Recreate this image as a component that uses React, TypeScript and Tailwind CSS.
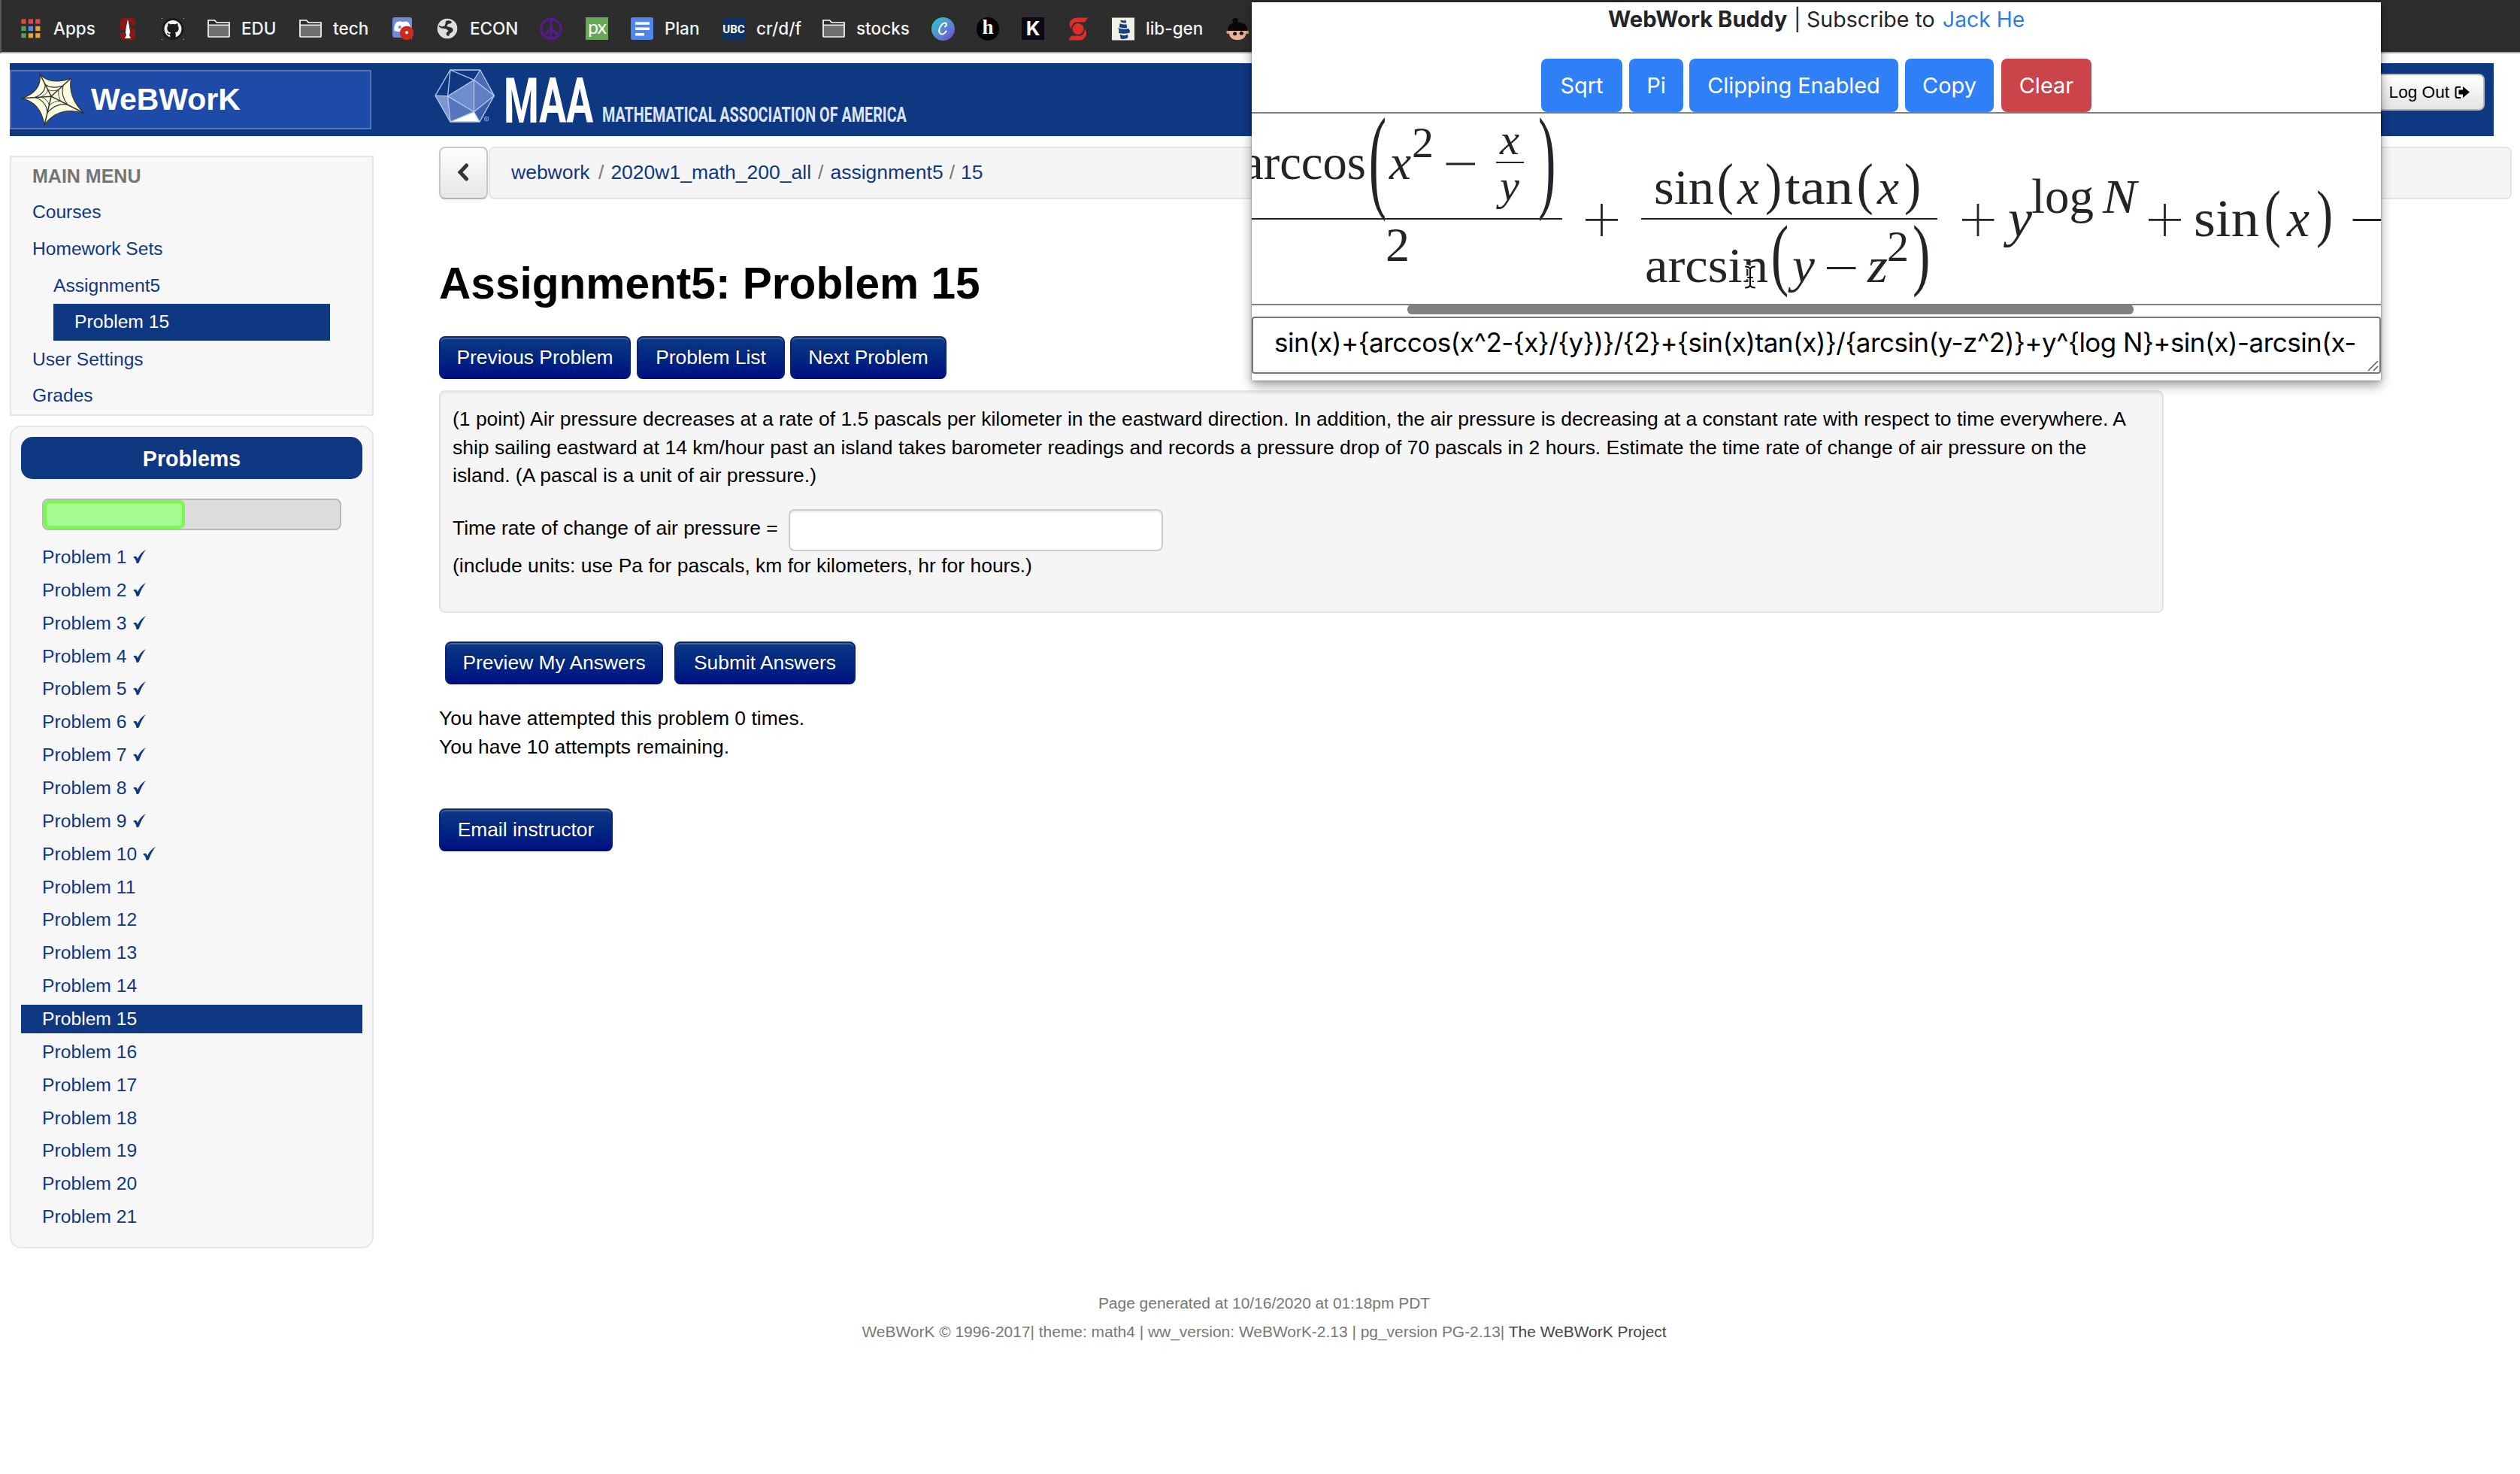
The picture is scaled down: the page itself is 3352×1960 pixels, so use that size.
import React from "react";

type Children = { children?: React.ReactNode };

const Folder = () => (
  <svg viewBox="0 0 30 24" className="w-[30px] h-[24px]">
    <path d="M1 22.2V1h8.6l2.6 3H29v18.2q0 .8-.8.8H1.8q-.8 0-.8-.8z" fill="#2d2d2d" stroke="#fff" strokeWidth="1.7" />
    <rect x="2" y="8" width="26" height="14" fill="#6f6f6f" />
    <path d="M1 7.3h28" stroke="#fff" strokeWidth="1.5" />
  </svg>
);

const AppsGrid = () => (
  <svg viewBox="0 0 26 26" className="w-[26px] h-[26px]">
    {["#e34a3f", "#e34a3f", "#e34a3f", "#57a05c", "#4c8df6", "#e6a33a", "#57a05c", "#e6a33a", "#e6a33a"].map((c, i) => (
      <rect key={i} x={0.4 + (i % 3) * 9.4} y={0.4 + Math.floor(i / 3) * 9.4} width="6.2" height="6.2" fill={c} />
    ))}
  </svg>
);

const Stanford = () => (
  <svg viewBox="0 0 30 31" className="w-[30px] h-[31px]">
    <path d="M8 1h14l3 3v7h-6V7h-6v5l12 3v12l-3 3H8l-3-3v-7h6v4h7v-5L5 16V4z" fill="#8c1515" />
    <path d="M15 3l1.800 8 1.200 9-1 4 2 4h-8l2-4-1-4 1.200-9z" fill="#fff" />
  </svg>
);

const GithubMark = () => (
  <svg viewBox="0 0 30 30" className="w-[31px] h-[31px]">
    <circle cx="15" cy="15" r="14.500" fill="#1a1a1a" />
    <path d="M15 3.500C8.500 3.500 3.500 8.700 3.500 15c0 5 3.200 9.400 7.700 11v-3.400c-3 .6-3.800-1-4.400-2.400 1.800.3 2.400 1.600 4.500 1.300.1-.8.500-1.400.9-1.800-3.300-.5-4.900-2.200-4.900-5.500 0-1.400.4-2.500 1.200-3.400-.3-1-.2-2.200.2-3.100 1.500 0 2.500.7 3.300 1.200 2-.5 4-.5 6 0 .8-.5 1.800-1.200 3.300-1.200.4.9.5 2.100.2 3.100.8.9 1.200 2 1.200 3.400 0 3.300-1.600 5-4.900 5.500.6.6 1 1.400 1 2.600V26c4.500-1.600 7.700-6 7.700-11C26.500 8.700 21.500 3.500 15 3.500z" fill="#f2f2f2" />
    <path d="M0 1h1.200M28.800 1H30M0 29h1.200M28.800 29H30" stroke="#bbb" strokeWidth="1.200" />
  </svg>
);

const DiscordMark = () => (
  <svg viewBox="0 0 30 31" className="w-[30px] h-[31px]">
    <rect x="2" y="0" width="26" height="27" rx="3" fill="#7289da" />
    <path d="M4.500 18C4 12 6 6 9 6q3-1.500 5 0h3q3-1 5 0c3 2 4 6 4 10l-3 3H9z" fill="#fff" />
    <circle cx="11.700" cy="13" r="2" fill="#7289da" />
    <path d="M26 27l2 3v-6z" fill="#7289da" />
    <circle cx="21" cy="20.800" r="9.300" fill="#cc2a1e" />
    <circle cx="21" cy="20.300" r="2" fill="#fff" />
  </svg>
);

const Globe = () => (
  <svg viewBox="0 0 28 28" className="w-[28px] h-[28px]">
    <circle cx="14" cy="14" r="13.300" fill="#dedede" />
    <path d="M12 4q5-2 8 1l-1 2-4 1-2 3 6 1.500q4 2 2 5.500l-4 3-1 3-3-1-.5-3 3-3-3-2.500-6-1q-4-1-4-4l4 2 4-1 1-3z" fill="#2d2d2d" />
  </svg>
);

const Peace = () => (
  <svg viewBox="0 0 31 31" className="w-[31px] h-[31px]">
    <g fill="none" stroke="#541a8f" strokeWidth="3.200">
      <circle cx="15.500" cy="15.500" r="13.700" />
      <path d="M15.500 2v27M15.500 15L6 24.500M15.500 15l9.500 9.500" />
    </g>
  </svg>
);

const DocIcon = () => (
  <svg viewBox="0 0 30 30" className="w-[30px] h-[30px]">
    <rect width="30" height="30" rx="3" fill="#4f86ec" />
    <path d="M6 8h19M6 15.300h19M6 22.700h12" stroke="#fff" strokeWidth="3.600" />
  </svg>
);

const LetterC = () => (
  <span className="flex h-[31px] w-[31px] items-center justify-center rounded-full bg-linear-to-br from-[#35b6c9] from-20% to-[#6a35d8]">
    <svg viewBox="0 0 31 31" className="h-[31px] w-[31px]">
      <path d="M18 12.500q3-2 1.500-4.500-2.500-1.500-6 2c-3.500 4.500-4 9-2 11.500 2.500 2 6 .5 8-3" fill="none" stroke="#fff" strokeWidth="2" strokeLinecap="round" />
    </svg>
  </span>
);

const Scotia = () => (
  <svg viewBox="0 0 30 31" className="h-[31px] w-[30px]">
    <g fill="#dc2f27">
      <path d="M28 .5l-4 6H12q-5 1-6 9Q1 8 6 3.500 9 .5 13 .5z" />
      <path d="M2 30.500l4-6h12q5-1 6-9 4.500 6 0 11.500-3 3.500-7 3.500z" />
      <circle cx="15" cy="15.500" r="7.500" />
    </g>
  </svg>
);

const LibGen = () => (
  <svg viewBox="0 0 31 31" className="h-[31px] w-[31px]">
    <rect width="31" height="31" fill="#f0f0e4" />
    <g fill="#173f7d">
      <path d="M12 3q5 2 7 0l1 4q-4 1-8-1z" />
      <path d="M11 8q5 2 9 1l1 5q-6 1-11-1z" />
      <path d="M8 14q8 3 15 1 3 4 1 6-8 2-15 0 2-4-1-7z" />
      <path d="M11 23q6 3 11 0v5q-5 2-10 1z" />
    </g>
  </svg>
);

const GirlFace = () => (
  <svg viewBox="0 0 31 31" className="h-[31px] w-[31px]">
    <path d="M8 3l4-3 5 2-2 5h-5z" fill="#0b0708" />
    <path d="M2 19Q1 7 15.500 6 30 7 29 19l-2 5H4z" fill="#0b0708" />
    <circle cx="2.500" cy="20" r="2.300" fill="#d99a7e" />
    <circle cx="29" cy="20" r="2.300" fill="#d99a7e" />
    <path d="M3.500 18h24.500q0 12.500-12.300 12.500T3.500 18z" fill="#eab195" />
    <circle cx="12" cy="22" r="2.600" fill="#1d1112" />
    <circle cx="21" cy="21.500" r="2.600" fill="#1d1112" />
  </svg>
);

function Bookmark({ width, icon, label }: { width: string; icon: React.ReactNode; label?: string }) {
  return (
    <div className={"flex h-[31px] shrink-0 items-center " + width}>
      <span className="flex w-[30px] shrink-0 items-center justify-center">{icon}</span>
      {label && <span className="ml-[15px] whitespace-nowrap text-[22.500px] font-medium leading-[30px] text-[#f3f3f3]">{label}</span>}
    </div>
  );
}

function BookmarksBar() {
  return (
    <div className="flex h-[71px] items-center border-b-2 border-l-2 border-b-[#a9a9a9] border-l-[#575757] bg-[#2d2d2d] pl-[24px] pt-[7px] font-['Inter',sans-serif]">
      <Bookmark width="w-[129px]" icon={<AppsGrid />} label="Apps" />
      <Bookmark width="w-[60px]" icon={<Stanford />} />
      <Bookmark width="w-[61px]" icon={<GithubMark />} />
      <Bookmark width="w-[122px]" icon={<Folder />} label="EDU" />
      <Bookmark width="w-[122px]" icon={<Folder />} label="tech" />
      <Bookmark width="w-[60px]" icon={<DiscordMark />} />
      <Bookmark width="w-[138px]" icon={<Globe />} label="ECON" />
      <Bookmark width="w-[61px]" icon={<Peace />} />
      <Bookmark
        width="w-[60px]"
        icon={<span className="block h-[30px] w-[30px] bg-[#67a857] text-center font-['Lato',sans-serif] text-[25px] leading-[25px] tracking-[-1px] text-white">px</span>}
      />
      <Bookmark width="w-[122px]" icon={<DocIcon />} label="Plan" />
      <Bookmark
        width="w-[133px]"
        icon={<span className="block h-[30px] w-[30px] bg-[#0f3364] text-center font-['Roboto',sans-serif] text-[15px] font-bold leading-[33px] text-white">UBC</span>}
        label="cr/d/f"
      />
      <Bookmark width="w-[145px]" icon={<Folder />} label="stocks" />
      <Bookmark width="w-[60px]" icon={<LetterC />} />
      <Bookmark
        width="w-[60px]"
        icon={<span className="block h-[31px] w-[31px] rounded-full bg-black text-center font-['Liberation_Serif',serif] text-[27px] font-bold leading-[27px] text-white">h</span>}
      />
      <Bookmark
        width="w-[60px]"
        icon={<span className="block h-[30px] w-[30px] bg-[#0c0714] text-center text-[26px] font-bold leading-[29px] text-white">K</span>}
      />
      <Bookmark width="w-[60px]" icon={<Scotia />} />
      <Bookmark width="w-[152px]" icon={<LibGen />} label="lib-gen" />
      <Bookmark width="w-[60px]" icon={<GirlFace />} />
    </div>
  );
}

const SpiderWeb = () => (
  <svg viewBox="80 235 260 212" className="h-[71px] w-[87px] shrink-0">
    <path
      d="M158 240Q200 285 282 256Q268 330 332 394Q230 365 176 442Q160 350 84 336Q165 310 158 240Z"
      fill="#fbfbe0"
      stroke="#3a3a38"
      strokeWidth="4"
      strokeLinejoin="round"
    />
    <g fill="none" stroke="#33332f" strokeWidth="4.500">
      <path d="M158 240L203 328L282 256M203 328L332 394M203 328L176 442M203 328L84 336" />
      <path d="M179 281Q205 300 250 286Q240 325 268 361Q225 352 188 392Q182 345 138 332Q180 315 179 281Z" strokeWidth="3.500" />
      <path d="M189 301Q207 310 232 302Q228 322 240 347Q215 345 195 364Q190 340 162 330Q190 318 189 301Z" strokeWidth="2.500" />
    </g>
  </svg>
);

const Icosahedron = () => (
  <svg viewBox="170 214 250 220" className="h-[73px] w-[83px] shrink-0">
    <path d="M331 260L226 325L331 388Z" fill="#6f8ccb" />
    <path d="M331 260L412 323L331 388Z" fill="#5f7fc2" />
    <path d="M226 325L331 388L236 428Z" fill="#5576bc" />
    <path d="M176 323L226 325L236 428Z" fill="#7c96cf" />
    <path d="M356 220L412 323L331 260Z" fill="#4a6cb4" />
    <path d="M412 323L354 428L331 388Z" fill="#3b5fab" />
    <path d="M236 428L331 388L354 428Z" fill="#fff" />
    <g fill="none" stroke="#b7c7ea" strokeWidth="4" strokeLinejoin="round">
      <path d="M236 220H356L412 323L354 428H236L176 323Z" />
      <path d="M331 260L226 325L331 388Z" />
      <path d="M236 220L331 260L356 220M331 260L412 323L331 388L354 428M331 388L236 428L226 325L176 323M226 325L236 220" />
    </g>
    <circle cx="381" cy="416" r="8" fill="none" stroke="#6f8ccb" strokeWidth="4" />
    <circle cx="381" cy="416" r="3.500" fill="#6f8ccb" />
  </svg>
);

const LogOutIcon = () => (
  <svg viewBox="0 0 20 18" className="ml-[7px] h-[18px] w-[20px]">
    <path d="M8 1.700H4Q1.500 1.700 1.500 4v9.500q0 2.500 2.500 2.500h4" fill="none" stroke="#000" strokeWidth="2" />
    <path d="M5.500 5.500H11V1l9 7.500L11 16v-4.500H5.500z" fill="#000" />
  </svg>
);

function Header() {
  return (
    <header className="ml-[13px] mt-[13px] flex h-[97px] w-[3304px] items-start bg-[#0f3883] pt-[9px]">
      <div className="flex h-[79px] w-[481px] shrink-0 items-center border-2 border-[#5376b8] bg-[#1e4ba8] pl-[12px]">
        <SpiderWeb />
        <span className="ml-[7px] text-[41px] font-bold leading-[75px] text-white">WeBWorK</span>
      </div>
      <div className="ml-[83px] mt-[-2px] flex items-start">
        <Icosahedron />
        <div className="ml-[10px] mt-[2px] w-[131px] shrink-0">
          <span className="block origin-left scale-x-[0.645] whitespace-nowrap font-['Roboto',sans-serif] text-[83px] font-bold leading-[84px] text-white">MAA</span>
        </div>
        <span className="mt-[41px] block w-[500px] origin-left scale-x-[0.706] whitespace-nowrap font-['Roboto',sans-serif] text-[28px] font-bold leading-[42px] text-[#dce4f4]">
          MATHEMATICAL ASSOCIATION OF AMERICA
        </span>
      </div>
      <button className="ml-auto mr-[12px] mt-[5px] flex h-[49px] items-center rounded-lg border-2 border-[#b9bcc4] bg-linear-to-b from-white to-[#e4e4e4] px-[18px] text-[22.600px] text-black">
        Log Out
        <LogOutIcon />
      </button>
    </header>
  );
}

function MenuRow({ children, indent = "pl-[28px]" }: Children & { indent?: string }) {
  return <a className={"block h-[48.900px] text-[24.600px] leading-[49.500px] text-[#0f3883] " + indent}>{children}</a>;
}

function MainMenu() {
  return (
    <nav className="h-[346px] border-2 border-[#e6e6e6] bg-[#f7f7f7]">
      <h2 className="h-[48px] pl-[28px] pt-px text-[25px] font-bold leading-[48px] text-[#757575]">MAIN MENU</h2>
      <MenuRow>Courses</MenuRow>
      <MenuRow>Homework Sets</MenuRow>
      <MenuRow indent="pl-[56px]">Assignment5</MenuRow>
      <a className="ml-[56px] block h-[48.900px] w-[368px] bg-[#0f3883] pl-[28px] text-[24.700px] leading-[48.900px] text-white">Problem 15</a>
      <MenuRow>User Settings</MenuRow>
      <MenuRow>Grades</MenuRow>
    </nav>
  );
}

const Check = () => (
  <svg viewBox="0 0 16 17" role="img" aria-label="completed" className="ml-[8px] inline-block h-[18px] w-[17px] align-baseline">
    <path d="M0 9.500q2.500-1.900 4.300-.7.800.8 1.300 2.700Q9.300 3.500 16 0 11 6 7.300 16.400q-.8.700-3 .5Q3.300 11 0 9.500z" fill="#0f3883" />
  </svg>
);

const problems = Array.from({ length: 21 }, (_, i) => i + 1);

function ProblemsPanel() {
  return (
    <section className="mt-[13px] h-[1094px] rounded-[15px] border-2 border-[#e6e6e6] bg-[#f7f7f7] px-[13px] pt-[13px]">
      <h2 className="h-[56px] rounded-[15px] bg-[#0f3883] text-center text-[28.600px] font-bold leading-[58px] text-white">Problems</h2>
      <div className="mx-[28px] mt-[26px] h-[42px] rounded-lg border-2 border-[#b9b9b9] bg-[#dcdcdc]">
        <div className="h-[38px] w-[188px] rounded-[7px] border-4 border-[#76fb4c] bg-[#a6fb93]" />
      </div>
      <ul className="mt-[17px] flex flex-col gap-[6.210px]">
        {problems.map((n) => (
          <li
            key={n}
            className={
              n === 15
                ? "h-[37.660px] whitespace-pre bg-[#0f3883] pl-[28px] text-[24.700px] leading-[37.660px] text-white"
                : "h-[37.660px] whitespace-pre pl-[28px] text-[24.700px] leading-[37.660px] text-[#0f3883]"
            }
          >
            Problem {n}
            {n <= 10 && <Check />}
          </li>
        ))}
      </ul>
    </section>
  );
}

function PrimaryButton({ children, width }: Children & { width: string }) {
  return (
    <button
      className={
        "h-[57px] rounded-lg border-2 border-x-[#06246f] border-b-[#001070] border-t-[#0b2f74] bg-linear-to-b from-[#0f3883] to-[#000d82] text-center text-[26.360px] leading-[53px] text-white shadow-[inset_0_2px_0_rgba(255,255,255,0.2),0_2px_4px_rgba(0,0,0,0.05)] [text-shadow:0_-2px_0_rgba(0,0,0,0.25)] " +
        width
      }
    >
      {children}
    </button>
  );
}

function Breadcrumb() {
  return (
    <div className="flex h-[70px] items-stretch">
      <button className="flex w-[65px] items-center justify-center rounded-lg border-2 border-[#c8c8c8] border-b-[#b3b3b3] bg-linear-to-b from-white to-[#e6e6e6] shadow-[0_2px_4px_rgba(0,0,0,0.05)]">
        <svg viewBox="0 0 16 24" className="-ml-0.5 -mt-0.5 h-[24px] w-[16px]">
          <path d="M12.500 3L4 12l8.500 9" fill="none" stroke="#333" strokeWidth="5" strokeLinecap="round" />
        </svg>
      </button>
      <div className="ml-px flex flex-1 items-center whitespace-pre rounded-lg border-2 border-[#e5e5e5] bg-[#f5f5f5] pl-[28px] text-[26.500px] text-[#0f3883]">
        <span className="w-[107px]">webwork</span>
        <span className="mx-[9px] text-[#777]">/</span>2020w1_math_200_all<span className="mx-[9px] text-[#777]">/</span>assignment5
        <span className="mx-[8px] text-[#777]">/</span>15
      </div>
    </div>
  );
}

function ProblemPage() {
  return (
    <main className="ml-[87px] w-[2757px] text-[26.470px] leading-[37.660px] text-black">
      <Breadcrumb />
      <h1 className="mt-[74px] h-[75px] text-[58.600px] font-bold leading-[75px]">Assignment5: Problem 15</h1>
      <div className="mt-[33px] flex">
        <PrimaryButton width="w-[255px]">Previous Problem</PrimaryButton>
        <PrimaryButton width="ml-[8px] w-[197px]">Problem List</PrimaryButton>
        <PrimaryButton width="ml-[7px] w-[208px]">Next Problem</PrimaryButton>
      </div>
      <section className="mt-[15px] h-[296px] w-[2294px] rounded-lg border-2 border-[#e3e3e3] bg-[#f5f5f5] pl-[16px] pt-[18px] shadow-[inset_0_2px_2px_rgba(0,0,0,0.05)]">
        <p className="whitespace-nowrap">
          (1 point) Air pressure decreases at a rate of 1.5 pascals per kilometer in the eastward direction. In addition, the air pressure is decreasing at a constant rate with respect to time everywhere. A
          <br />
          ship sailing eastward at 14 km/hour past an island takes barometer readings and records a pressure drop of 70 pascals in 2 hours. Estimate the time rate of change of air pressure on the
          <br />
          island. (A pascal is a unit of air pressure.)
        </p>
        <div className="mt-[25px] flex h-[56px] items-center">
          <span className="mb-[5px] w-[447px] tracking-[-0.030px]">Time rate of change of air pressure =</span>
          <input className="h-[56px] w-[498px] rounded-lg border-2 border-[#ccc] bg-white shadow-[inset_0_2px_2px_rgba(0,0,0,0.075)]" />
        </div>
        <p className="pt-px">(include units: use Pa for pascals, km for kilometers, hr for hours.)</p>
      </section>
      <div className="ml-[8px] mt-[38px] flex gap-[15px]">
        <PrimaryButton width="w-[290px]">Preview My Answers</PrimaryButton>
        <PrimaryButton width="w-[241px]">Submit Answers</PrimaryButton>
      </div>
      <p className="mt-[27px]">
        You have attempted this problem 0 times.
        <br />
        You have 10 attempts remaining.
      </p>
      <div className="mt-[63px] flex">
        <PrimaryButton width="w-[231px]">Email instructor</PrimaryButton>
      </div>
    </main>
  );
}

const INK = "#212529";

/** Stretchy delimiter filling the box x..x+w, y..y+h. */
function Paren({ x, y, w, h, close = false }: { x: number; y: number; w: number; h: number; close?: boolean }) {
  const sx = w / 25.6;
  const sy = h / 87;
  const bearing = close ? 2.9 : 4.8;
  return (
    <text fontSize="100" transform={`translate(${x - bearing * sx} ${y + 69 * sy}) scale(${sx} ${sy})`}>
      {close ? ")" : "("}
    </text>
  );
}

/** Word or symbol set to an exact advance width. */
function Word({ x, y, w, size, italic, children }: { x: number; y: number; w: number; size: number; italic?: boolean; children: string }) {
  return (
    <text x={x} y={y + 1} fontSize={size} textLength={w} lengthAdjust="spacingAndGlyphs" fontStyle={italic ? "italic" : "normal"}>
      {children}
    </text>
  );
}

function Formula() {
  return (
    <svg viewBox="1665 151 1502 253" className="block h-[253px] w-[1502px] font-['Liberation_Serif',serif]" fill={INK}>
      <Word x={1652} y={237} w={165} size={65}>arccos</Word>
      <Paren x={1824} y={157} w={18} h={132} />
      <Word x={1848} y={237} w={29} size={65} italic>x</Word>
      <Word x={1878} y={208} w={29} size={57}>2</Word>
      <rect x="1923.500" y="216.500" width="38.500" height="3" />
      <Word x={1995} y={204} w={26} size={56} italic>x</Word>
      <rect x="1990" y="215" width="37" height="2" />
      <Word x={1995} y={265} w={26} size={58} italic>y</Word>
      <Paren x={2048} y={157} w={18} h={132} close />
      <rect x="1665" y="290" width="413" height="2" />
      <Word x={1843} y={346} w={32} size={64}>2</Word>
      <path d="M2109 292.300h43M2130.500 271v43" stroke={INK} strokeWidth="2.800" />

      <Word x={2200} y={270} w={80} size={65}>sin</Word>
      <Paren x={2287} y={217} w={17} h={67} />
      <Word x={2311} y={270} w={29} size={65} italic>x</Word>
      <Paren x={2350} y={217} w={17} h={67} close />
      <Word x={2374} y={270} w={91} size={65}>tan</Word>
      <Paren x={2473} y={217} w={17} h={67} />
      <Word x={2497} y={270} w={29} size={65} italic>x</Word>
      <Paren x={2535} y={217} w={17} h={67} close />
      <rect x="2183" y="290" width="394" height="2" />
      <Word x={2188} y={374} w={164} size={65}>arcsin</Word>
      <Paren x={2359} y={299} w={18} h={93} />
      <Word x={2384} y={374} w={30} size={65} italic>y</Word>
      <rect x="2430" y="355" width="38.500" height="3" />
      <Word x={2484} y={374} w={27} size={65} italic>z</Word>
      <Word x={2510} y={346} w={29} size={57}>2</Word>
      <Paren x={2546} y={299} w={18} h={93} close />

      <path d="M2610 292.300h42.500M2631 271v43" stroke={INK} strokeWidth="2.800" />
      <Word x={2671} y={313} w={32} size={70} italic>y</Word>
      <Word x={2702} y={281.500} w={83} size={66}>log</Word>
      <Word x={2797} y={281.500} w={45} size={63} italic>N</Word>
      <path d="M2858 292.300h43M2879.500 271v43" stroke={INK} strokeWidth="2.800" />
      <Word x={2918} y={313} w={87} size={70}>sin</Word>
      <Paren x={3015} y={253} w={17} h={74} />
      <Word x={3042} y={313} w={30} size={70} italic>x</Word>
      <Paren x={3083} y={253} w={17} h={74} close />
      <rect x="3129.500" y="291" width="40" height="3" />

      <g fill="none" strokeLinecap="round">
        <path d="M2322 354.500q5 0 6 3.500q1-3.500 6-3.500M2328 358v21M2322 382.500q5 0 6-3.500q1 3.500 6 3.500M2325 369h6" stroke="#fff" strokeWidth="5" />
        <path d="M2322 354.500q5 0 6 3.500q1-3.500 6-3.500M2328 358v21M2322 382.500q5 0 6-3.500q1 3.500 6 3.500M2325 369h6" stroke="#000" strokeWidth="2" />
      </g>
    </svg>
  );
}

function PopupButton({ children, look }: Children & { look: string }) {
  return <button className={"h-[71px] rounded-lg text-center text-[29px] leading-[71px] text-white " + look}>{children}</button>;
}

function BuddyPopup() {
  return (
    <aside className="absolute left-[1665px] top-[3px] flex h-[503px] w-[1502px] flex-col bg-white font-['Inter',sans-serif] text-[#212529] shadow-[0_0_2px_rgba(0,0,0,0.55),0_6px_14px_rgba(0,0,0,0.4)]">
      <p className="flex h-[75px] whitespace-nowrap pl-[474px] text-[28.600px] leading-[46px]">
        <b className="w-[247px] text-[29.200px]">WebWork Buddy</b>
        <span className="w-[17px]">|</span>
        <span className="w-[181px]">Subscribe to</span>
        <a className="text-[28.300px] text-[#2f7de1]">Jack He</a>
      </p>
      <div className="ml-[385px] flex">
        <PopupButton look="w-[108px] bg-[#2f80f7]">Sqrt</PopupButton>
        <PopupButton look="ml-[9px] w-[72px] bg-[#2f80f7]">Pi</PopupButton>
        <PopupButton look="ml-[8px] w-[278px] bg-[#2f80f7] tracking-[-0.100px]">Clipping Enabled</PopupButton>
        <PopupButton look="ml-[9px] w-[118px] bg-[#2f80f7]">Copy</PopupButton>
        <PopupButton look="ml-[10px] w-[120px] bg-[#cb444a]">Clear</PopupButton>
      </div>
      <div className="h-[257px] overflow-hidden border-y-2 border-[#808080]">
        <Formula />
      </div>
      <div className="-mt-px ml-[207px] h-[13px] w-[966px] rounded-[6px] bg-[#808080]" />
      <div className="relative mt-[3px] h-[76px] overflow-hidden whitespace-nowrap rounded-[4px] border-2 border-[#767676] pl-[28px] text-[35px] leading-[65px] tracking-[-0.530px] text-black">
        {"sin(x)+{arccos(x^2-{x}/{y})}/{2}+{sin(x)tan(x)}/{arcsin(y-z^2)}+y^{log N}+sin(x)-arcsin(x-"}
        <svg viewBox="0 0 15 15" className="absolute bottom-[1px] right-[1px] h-[15px] w-[15px]">
          <path d="M1 14L14 1M8 14l6-6" stroke="#555" strokeWidth="1.500" />
        </svg>
      </div>
    </aside>
  );
}

export default function App() {
  return (
    <div className="relative h-[1960px] w-[3352px] overflow-hidden bg-white font-['Liberation_Sans',Arial,sans-serif]">
      <BookmarksBar />
      <Header />
      <div className="mt-[14px] flex items-start">
        <div className="ml-[13px] mt-[12px] w-[484px] shrink-0">
          <MainMenu />
          <ProblemsPanel />
        </div>
        <ProblemPage />
      </div>
      <footer className="mt-[54px] pl-[11px] text-center text-[20.950px] leading-[37.500px] text-[#777]">
        <p>Page generated at 10/16/2020 at 01:18pm PDT</p>
        <p>
          WeBWorK © 1996-2017| theme: math4 | ww_version: WeBWorK-2.13 | pg_version PG-2.13| <a className="text-[#444]">The WeBWorK Project</a>
        </p>
      </footer>
      <BuddyPopup />
    </div>
  );
}
